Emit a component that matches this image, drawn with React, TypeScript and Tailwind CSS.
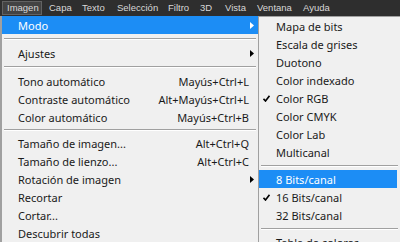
import React from 'react'

// start offsets measured off the reference bar
const menuBar = [
  { label: 'Capa', w: 'w-[33px]' },
  { label: 'Texto', w: 'w-[35px]' },
  { label: 'Selección', w: 'w-[51px]' },
  { label: 'Filtro', w: 'w-[32px]' },
  { label: '3D', w: 'w-[25px]' },
  { label: 'Vista', w: 'w-[32px]' },
  { label: 'Ventana', w: 'w-[46px]' },
  { label: 'Ayuda', w: 'w-[40px]' },
]

type Item =
  | { sep: true; h: string }
  | { sep?: false; label: string; shortcut?: string; sub?: boolean; active?: boolean; checked?: boolean }

const mainItems: Item[] = [
  { label: 'Modo', sub: true, active: true },
  { sep: true, h: 'h-[10px]' },
  { label: 'Ajustes', sub: true },
  { sep: true, h: 'h-[10px]' },
  { label: 'Tono automático', shortcut: 'Mayús+Ctrl+L' },
  { label: 'Contraste automático', shortcut: 'Alt+Mayús+Ctrl+L' },
  { label: 'Color automático', shortcut: 'Mayús+Ctrl+B' },
  { sep: true, h: 'h-[8px]' },
  { label: 'Tamaño de imagen...', shortcut: 'Alt+Ctrl+Q' },
  { label: 'Tamaño de lienzo...', shortcut: 'Alt+Ctrl+C' },
  { label: 'Rotación de imagen', sub: true },
  { label: 'Recortar' },
  { label: 'Cortar...' },
  { label: 'Descubrir todas' },
]

const subItems: Item[] = [
  { label: 'Mapa de bits' },
  { label: 'Escala de grises' },
  { label: 'Duotono' },
  { label: 'Color indexado' },
  { label: 'Color RGB', checked: true },
  { label: 'Color CMYK' },
  { label: 'Color Lab' },
  { label: 'Multicanal' },
  { sep: true, h: 'h-[9px]' },
  { label: '8 Bits/canal', active: true },
  { label: '16 Bits/canal', checked: true },
  { label: '32 Bits/canal' },
  { sep: true, h: 'h-[9px]' },
  { label: 'Tabla de colores...' },
]

function Arrow({ white }: { white?: boolean }) {
  return (
    <svg width="4" height="7" viewBox="0 0 4 7" className="shrink-0">
      <path d="M0 0 L4 3.5 L0 7 Z" fill={white ? '#ffffff' : '#000000'} />
    </svg>
  )
}

function Check({ white }: { white?: boolean }) {
  return (
    <svg width="7" height="7" viewBox="0 0 7 7" className="shrink-0">
      <path d="M0.5 3.8 L2.5 6 L6.5 0.8" stroke={white ? '#fff' : '#000'} strokeWidth="1.6" fill="none" />
    </svg>
  )
}

function Separator({ h }: { h: string }) {
  return (
    <div className={`${h} shrink-0 flex flex-col justify-center px-[2px]`}>
      <div className="h-px bg-[#a0a0a0]" />
      <div className="h-px bg-white" />
    </div>
  )
}

export default function App() {
  return (
    <div
      className="w-[400px] h-[242px] overflow-hidden bg-[#f0f0f0] flex flex-col text-[11px] leading-none"
      style={{ fontFamily: '"Noto Sans", "Open Sans", sans-serif' }}
    >
      {/* Menu bar */}
      <div
        className="h-[16px] bg-[#2e2e2e] flex items-stretch text-[#d8d8d8] text-[9.5px] shrink-0"
        style={{ fontFamily: '"Liberation Sans", Arial, sans-serif' }}
      >
        <div className="ml-[2px] mr-[7px] my-px w-[40px] pl-[4px] flex items-center bg-[#434343] border border-[#626262]">
          Imagen
        </div>
        {menuBar.map((m) => (
          <div key={m.label} className={`${m.w} shrink-0 flex items-center`}>
            {m.label}
          </div>
        ))}
      </div>

      <div className="flex flex-1 min-h-0">
        {/* Main menu */}
        <div className="w-[258px] border-l-2 border-[#a0a0a0] flex flex-col shrink-0 overflow-hidden">
          {mainItems.map((it, i) =>
            it.sep ? (
              <Separator key={i} h={it.h} />
            ) : (
              <div
                key={i}
                className={`h-[18px] flex items-center pl-[16px] pr-[4px] shrink-0 ${
                  it.active ? 'bg-[#1c8df5] text-white' : 'text-[#1a1a1a]'
                }`}
              >
                <span className="flex-1">{it.label}</span>
                {it.shortcut && <span className="mr-[5px]">{it.shortcut}</span>}
                {it.sub && <Arrow white={it.active} />}
              </div>
            )
          )}
        </div>

        {/* Submenu */}
        <div className="flex-1 border-l border-t border-[#a0a0a0] flex flex-col overflow-hidden">
          {subItems.map((it, i) =>
            it.sep ? (
              <Separator key={i} h={it.h} />
            ) : (
              <div
                key={i}
                className={`h-[18px] flex items-center pl-[4px] pr-[4px] mr-[3px] shrink-0 ${
                  it.active ? 'bg-[#1c8df5] text-white' : 'text-[#1a1a1a]'
                }`}
              >
                <span className="w-[13px] flex">{it.checked && <Check white={it.active} />}</span>
                <span>{it.label}</span>
              </div>
            )
          )}
        </div>
      </div>
    </div>
  )
}
